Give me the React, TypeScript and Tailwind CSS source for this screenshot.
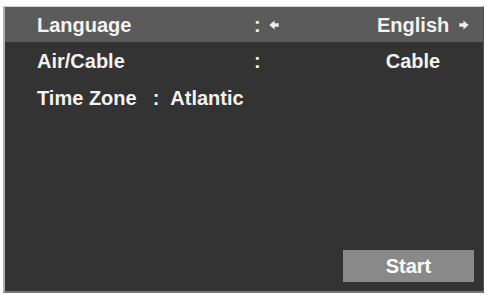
function Arrow({ dir }: { dir: "left" | "right" }) {
    return (
        <svg width="10" height="10" viewBox="0 0 9 9" className={dir === "right" ? "rotate-180" : ""}>
            <path d="M0.3 4.5 L5 0.5 L5 3 L8.7 3 L8.7 6 L5 6 L5 8.5 Z" fill="#ededed" />
        </svg>
    );
}

export default function App() {
    return (
        <div className="w-[487px] h-[295px] bg-white pt-[6px] pl-[3px] font-['Liberation_Sans',Arial,sans-serif] font-bold text-[20px] text-[#f2f2f2]">
            <div className="w-[481px] h-[287px] bg-[#333333] border-t border-t-[#d0d0d0] border-l-2 border-l-[#b0b0b0] border-r border-r-[#555] border-b-2 border-b-[#777] flex flex-col">
                <div className="h-[35px] bg-[#5b5b5b] flex items-center pl-[32px]">
                    <span className="w-[217px]">Language</span>
                    <span className="w-[15px]">:</span>
                    <Arrow dir="left" />
                    <span className="w-[98px]" />
                    <span className="w-[72px] text-center">English</span>
                    <span className="w-[10px]" />
                    <Arrow dir="right" />
                </div>
                <div className="h-[37px] flex items-center pl-[32px]">
                    <span className="w-[217px]">Air/Cable</span>
                    <span className="w-[15px]">:</span>
                    <span className="w-[10px]" />
                    <span className="w-[98px]" />
                    <span className="w-[72px] text-center">Cable</span>
                </div>
                <div className="h-[37px] flex items-center pl-[32px]">
                    <span>Time Zone</span>
                    <span className="ml-[16px] mr-[11px]">:</span>
                    <span>Atlantic</span>
                </div>
                <div className="flex-1" />
                <div className="flex justify-end pr-[9px] pb-[9px]">
                    <div className="w-[131px] h-[32px] bg-[#898989] flex items-center justify-center text-white">
                        Start
                    </div>
                </div>
            </div>
        </div>
    );
}
